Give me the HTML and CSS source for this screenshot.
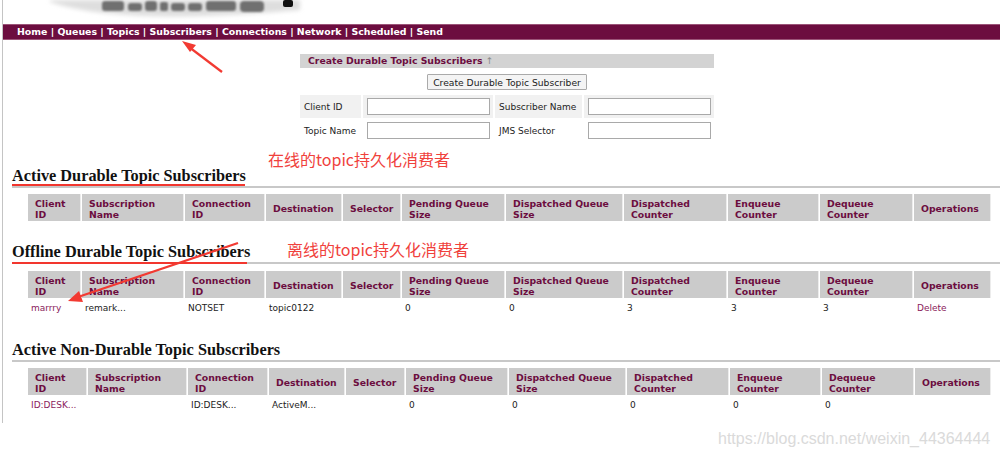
FILE: index.html
```html
<!DOCTYPE html>
<html>
<head>
<meta charset="utf-8">
<link rel="stylesheet" href="styles.css">
</head>
<body>
<div class="page">
  <div class="logo">
    <svg class="logo-art" width="320" height="24" viewBox="0 0 320 24">
      <defs>
        <filter id="b1" x="-20%" y="-50%" width="140%" height="200%"><feGaussianBlur stdDeviation="2.2"/></filter>
        <filter id="b2" x="-20%" y="-50%" width="140%" height="200%"><feGaussianBlur stdDeviation="1.3"/></filter>
      </defs>
      <path d="M50 2 Q 120 26 300 10 L 300 0 L 50 0 Z" fill="#dedede" filter="url(#b1)"/>
      <g fill="#707070" filter="url(#b2)">
        <rect x="102" y="1" width="22" height="10" rx="3"/>
        <rect x="128" y="3" width="14" height="8" rx="3"/>
        <rect x="145" y="1" width="12" height="10" rx="3"/>
        <rect x="160" y="2" width="8" height="9" rx="2"/>
        <rect x="171" y="3" width="14" height="8" rx="3"/>
        <rect x="188" y="3" width="14" height="8" rx="3"/>
        <rect x="206" y="1" width="30" height="10" rx="3"/>
        <rect x="240" y="1" width="24" height="11" rx="4"/>
      </g>
      <rect x="283" y="0" width="10" height="7" rx="2" fill="#111"/>
    </svg>
  </div>
  <div class="nav">
    <a>Home</a> | <a>Queues</a> | <a>Topics</a> | <a>Subscribers</a> | <a>Connections</a> | <a>Network</a> | <a>Scheduled</a> | <a>Send</a>
  </div>

  <div class="content">
    <div class="create-box">
      <div class="create-title">Create Durable Topic Subscribers <span class="arrow-up">↑</span></div>
      <div class="btn-row"><button class="btn">Create Durable Topic Subscriber</button></div>
      <table class="form">
        <tr class="shade">
          <td class="lbl l1">Client ID</td><td class="inp"><span class="input"></span></td>
          <td class="lbl l2">Subscriber Name</td><td class="inp"><span class="input"></span></td>
        </tr>
        <tr>
          <td class="lbl l1">Topic Name</td><td class="inp"><span class="input"></span></td>
          <td class="lbl l2">JMS Selector</td><td class="inp"><span class="input"></span></td>
        </tr>
      </table>
    </div>

    <h2 class="sec s1">Active Durable Topic Subscribers</h2>
    <table class="grid ga t1">
      <tr>
        <th class="c1">Client<br>ID</th><th class="c2">Subscription<br>Name</th><th class="c3">Connection<br>ID</th><th class="c4">Destination</th><th class="c5">Selector</th><th class="c6">Pending Queue<br>Size</th><th class="c7">Dispatched Queue<br>Size</th><th class="c8">Dispatched<br>Counter</th><th class="c9">Enqueue<br>Counter</th><th class="c10">Dequeue<br>Counter</th><th class="c11">Operations</th>
      </tr>
    </table>

    <h2 class="sec s2">Offline Durable Topic Subscribers</h2>
    <table class="grid ga t2">
      <tr>
        <th class="c1">Client<br>ID</th><th class="c2">Subscription<br>Name</th><th class="c3">Connection<br>ID</th><th class="c4">Destination</th><th class="c5">Selector</th><th class="c6">Pending Queue<br>Size</th><th class="c7">Dispatched Queue<br>Size</th><th class="c8">Dispatched<br>Counter</th><th class="c9">Enqueue<br>Counter</th><th class="c10">Dequeue<br>Counter</th><th class="c11">Operations</th>
      </tr>
      <tr>
        <td><a class="link">marrry</a></td><td>remark...</td><td>NOTSET</td><td>topic0122</td><td></td><td>0</td><td>0</td><td>3</td><td>3</td><td>3</td><td><a class="link">Delete</a></td>
      </tr>
    </table>

    <h2 class="sec s3">Active Non-Durable Topic Subscribers</h2>
    <table class="grid gb t3">
      <tr>
        <th class="c1">Client<br>ID</th><th class="c2">Subscription<br>Name</th><th class="c3">Connection<br>ID</th><th class="c4">Destination</th><th class="c5">Selector</th><th class="c6">Pending Queue<br>Size</th><th class="c7">Dispatched Queue<br>Size</th><th class="c8">Dispatched<br>Counter</th><th class="c9">Enqueue<br>Counter</th><th class="c10">Dequeue<br>Counter</th><th class="c11">Operations</th>
      </tr>
      <tr>
        <td><a class="link">ID:DESK...</a></td><td></td><td>ID:DESK...</td><td>ActiveM...</td><td></td><td>0</td><td>0</td><td>0</td><td>0</td><td>0</td><td></td>
      </tr>
    </table>
  </div>

  <div class="note n1">在线的topic持久化消费者</div>
  <div class="note n2">离线的topic持久化消费者</div>
  <div class="redline r1"></div>
  <div class="redline r2"></div>
  <svg class="arrows" width="1000" height="457" viewBox="0 0 1000 457">
    <line x1="222" y1="72" x2="189" y2="47" stroke="#f23a32" stroke-width="2.2"/>
    <polygon points="182,41 196,45 190,52" fill="#f23a32"/>
    <line x1="238" y1="243" x2="78" y2="297" stroke="#f23a32" stroke-width="2.2"/>
    <polygon points="68,301 79,291 83,302" fill="#f23a32"/>
  </svg>
  <div class="watermark">https://blog.csdn.net/weixin_44364444</div>
</div>
</body>
</html>
```
FILE: styles.css
```css
html, body {
  margin: 0;
  padding: 0;
  background: #fff;
}
.page {
  position: relative;
  width: 1000px;
  height: 457px;
  overflow: hidden;
  font-family: "DejaVu Sans", Verdana, sans-serif;
}
.page::before {
  content: "";
  position: absolute;
  left: 2px;
  top: 0;
  width: 1px;
  height: 423px;
  background: #c4c4c4;
}
.logo {
  position: relative;
  height: 24px;
}
.logo-art {
  display: block;
}
.nav {
  margin-left: 3px;
  height: 14px;
  line-height: 14px;
  background: #6c0d3f;
  border-top: 1px solid #9b5478;
  border-bottom: 1px solid #9b5478;
  color: #fff;
  font-weight: bold;
  font-size: 9.4px;
  padding-left: 14px;
  white-space: nowrap;
}
.nav a { color: #fff; }
.content {
  padding-left: 12px;
  padding-top: 14px;
  font-size: 9px;
}
.create-box {
  margin-left: 288px;
  width: 414px;
}
.create-title {
  background: #d3d3d3;
  height: 14px;
  line-height: 14px;
  padding-left: 8px;
  color: #6c0d3f;
  font-weight: bold;
  font-size: 9.3px;
}
.arrow-up { color: #888; font-weight: normal; }
.btn-row {
  text-align: center;
  padding-top: 6px;
  height: 15px;
}
.btn {
  font-family: "DejaVu Sans", Verdana, sans-serif;
  font-size: 9.2px;
  height: 16px;
  padding: 0 5px;
  background: #f4f4f4;
  border: 1px solid #aaa;
  border-radius: 1px;
  color: #222;
}
.form {
  margin-top: 5px;
  width: 418px;
  table-layout: fixed;
  border-collapse: separate;
  border-spacing: 2px 1px;
  margin-left: -2px;
  color: #222;
}
.form td {
  padding: 0;
  height: 23px;
  box-sizing: border-box;
}
.shade td { background: #f1f1f1; }
.form .lbl { padding-left: 4px; }
.form .l1 { width: 61px; }
.form .l2 { width: 87px; }
.form .inp { width: 130px; }
.input {
  display: block;
  margin: 0 3px 0 4px;
  height: 15px;
  border: 1px solid #a9a9a9;
  background: #fff;
}
.sec {
  margin: 0;
  font-family: "Liberation Serif", "Times New Roman", serif;
  font-weight: bold;
  font-size: 16.3px;
  color: #111;
  border-bottom: 2px solid #c8c8c8;
  line-height: 18px;
  height: 19px;
}
.s1 { margin-top: 24px; }
.s2 { margin-top: 22px; }
.s3 { margin-top: 23px; }
.grid {
  table-layout: fixed;
  width: 964px;
  margin-left: 15px;
  margin-top: 6px;
  border-collapse: separate;
  border-spacing: 1px 0;
}
.t2 { margin-top: 7px; }
.grid th {
  box-sizing: border-box;
  background: #cbcbcb;
  color: #6c0d3f;
  font-size: 9.3px;
  font-weight: bold;
  text-align: left;
  line-height: 11px;
  height: 27px;
  padding: 2px 7px 0;
  border-right: 1px solid #ececec;
}
.grid td {
  font-size: 9px;
  color: #222;
  height: 20px;
  padding: 0 3px;
  white-space: nowrap;
  box-sizing: border-box;
}
.link { color: #8a1b5b; }
.ga .c1 { width: 53px; }
.ga .c2 { width: 102px; }
.ga .c3 { width: 80px; }
.ga .c4 { width: 76px; }
.ga .c5 { width: 58px; }
.ga .c6 { width: 103px; }
.ga .c7 { width: 117px; }
.ga .c8 { width: 103px; }
.ga .c9 { width: 91px; }
.ga .c10 { width: 93px; }
.ga .c11 { width: 77px; }
.gb .c1 { width: 59px; }
.gb .c2 { width: 99px; }
.gb .c3 { width: 80px; }
.gb .c4 { width: 76px; }
.gb .c5 { width: 59px; }
.gb .c6 { width: 102px; }
.gb .c7 { width: 117px; }
.gb .c8 { width: 102px; }
.gb .c9 { width: 91px; }
.gb .c10 { width: 92px; }
.gb .c11 { width: 76px; }
.note {
  position: absolute;
  font-family: "Noto Sans CJK SC", "Noto Sans", sans-serif;
  font-size: 16px;
  line-height: 18px;
  color: #f0413c;
  white-space: nowrap;
}
.n1 { left: 268px; top: 150px; }
.n2 { left: 287px; top: 240px; }
.redline {
  position: absolute;
  height: 2px;
  background: #f2362e;
}
.r1 { left: 12px; top: 184px; width: 233px; }
.r2 { left: 12px; top: 262px; width: 235px; }
.arrows {
  position: absolute;
  left: 0;
  top: 0;
}
.watermark {
  position: absolute;
  left: 718px;
  top: 430px;
  font-family: "Liberation Sans", Arial, sans-serif;
  font-size: 16px;
  color: #dadada;
  white-space: nowrap;
}
```
